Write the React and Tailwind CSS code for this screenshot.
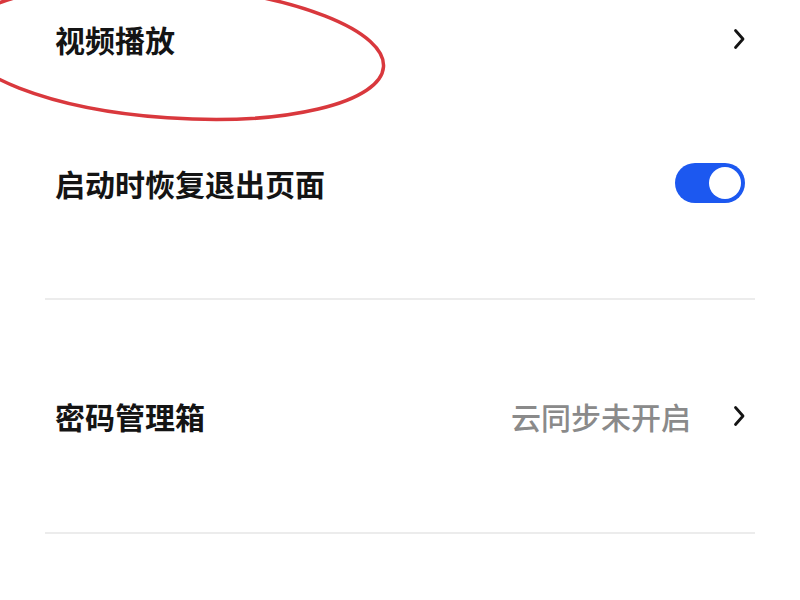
import React from "react";

function Chevron() {
  return (
    <svg width="12" height="22" viewBox="0 0 12 22" className="shrink-0">
      <path d="M2.5 2.5 L10 11 L2.5 19.5" fill="none" stroke="#141414" strokeWidth="2.8" strokeLinecap="round" strokeLinejoin="round" />
    </svg>
  );
}

export default function App() {
  const font = { fontFamily: '"Noto Sans CJK SC", "Noto Sans", sans-serif' };
  return (
    <div className="relative w-[800px] h-[600px] bg-white overflow-hidden" style={font}>
      <div className="flex flex-col">
        <div className="h-[78px] flex items-center justify-between px-[55px]">
          <span className="text-[30px] font-bold text-[#141414] leading-none">视频播放</span>
          <Chevron />
        </div>
        <div className="h-[210px] flex items-center justify-between px-[55px]">
          <span className="text-[30px] font-bold text-[#141414] leading-none">启动时恢复退出页面</span>
          <div className="w-[70px] h-[40px] rounded-full bg-[#1c58f0] flex items-center justify-end pr-[4px]">
            <div className="w-[32px] h-[32px] rounded-full bg-white" />
          </div>
        </div>
        <div className="h-[10px]" />
        <div className="mx-[45px] h-[2px] bg-[#ececec]" />
        <div className="h-[232px] flex items-center justify-between px-[55px]">
          <span className="text-[30px] font-bold text-[#141414] leading-none">密码管理箱</span>
          <div className="flex items-center gap-[42px]">
            <span className="text-[30px] font-medium text-[#8a8a8a] leading-none">云同步未开启</span>
            <Chevron />
          </div>
        </div>
        <div className="mx-[45px] h-[2px] bg-[#ececec]" />
      </div>
      <svg className="absolute top-0 left-0 pointer-events-none" width="800" height="140" viewBox="0 0 800 140">
        <ellipse cx="172" cy="52" rx="212" ry="66" transform="rotate(4 172 52)" fill="none" stroke="#d9383d" strokeWidth="3.5" />
      </svg>
    </div>
  );
}
